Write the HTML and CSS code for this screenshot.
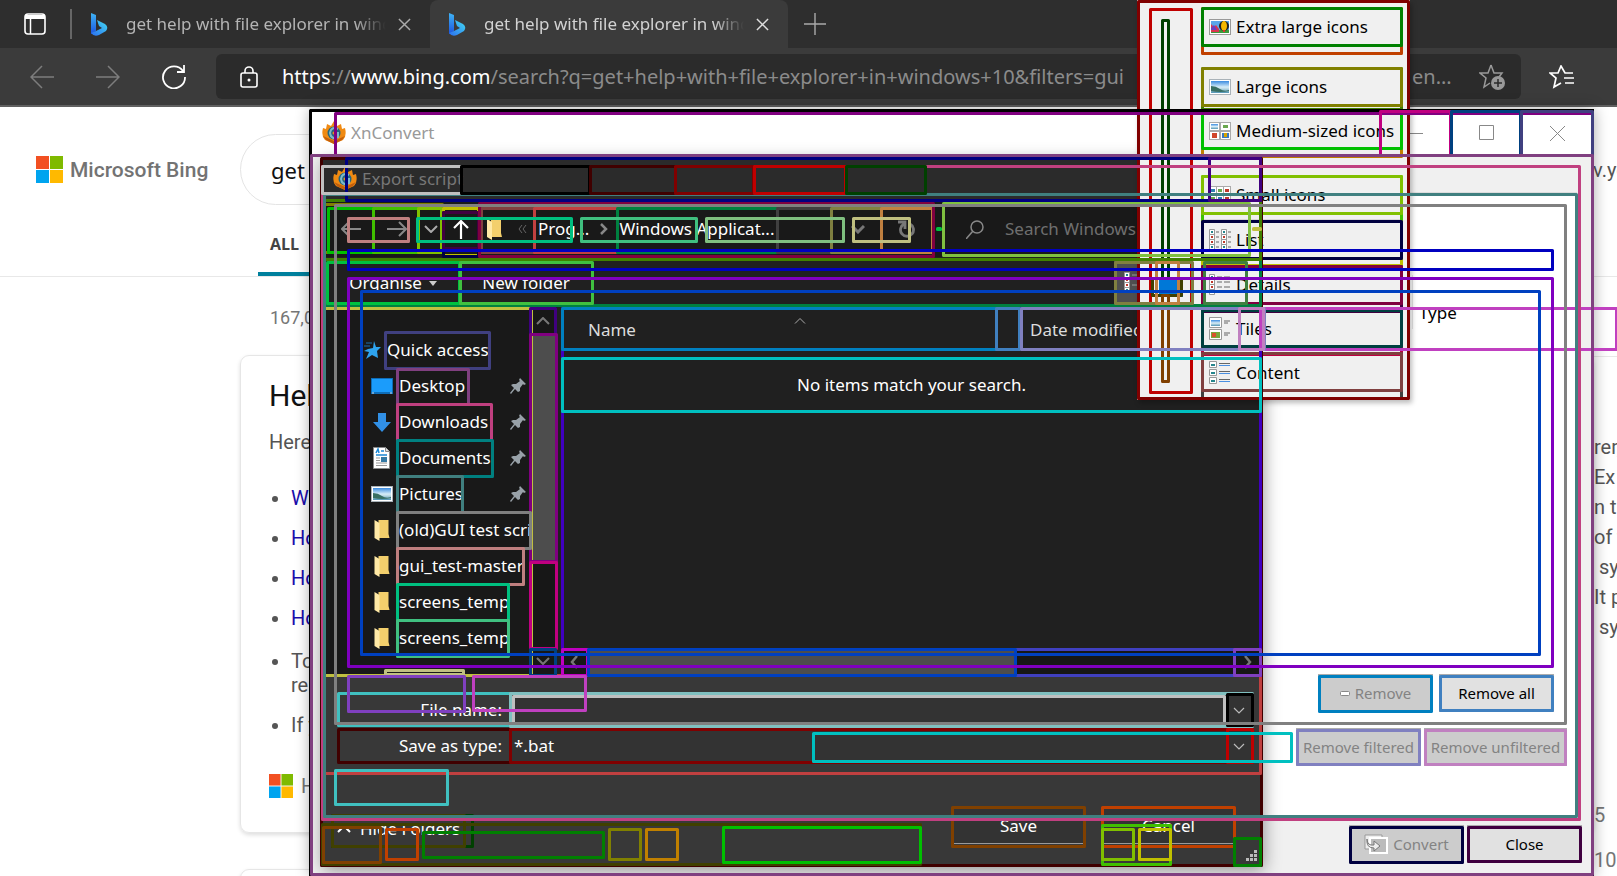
FILE: index.html
```html
<!DOCTYPE html>
<html lang="en">
<head>
<meta charset="utf-8">
<title>get help with file explorer in windows 10</title>
<link rel="stylesheet" href="styles.css">
</head>
<body>
<svg class="defs" aria-hidden="true">
  <defs>
    <linearGradient id="bingBlue" x1="0" y1="0" x2="0" y2="1"><stop offset="0" stop-color="#3fb4f5"/><stop offset="1" stop-color="#1b54e0"/></linearGradient>
    <linearGradient id="bingCyan" x1="1" y1="0" x2="0" y2="1"><stop offset="0" stop-color="#43dcf2"/><stop offset="1" stop-color="#2b6df0"/></linearGradient>
    <linearGradient id="sky" x1="0" y1="0" x2="0" y2="1"><stop offset="0" stop-color="#3a8be0"/><stop offset=".5" stop-color="#d5ecf8"/><stop offset=".6" stop-color="#c6e0ea"/><stop offset="1" stop-color="#4f93b4"/></linearGradient>
    <symbol id="bing" viewBox="0 0 17 23"><path d="M0 0l5 2v16l-5 3z" fill="url(#bingBlue)"/><path d="M6 7l8 4q4 3 1 7l-7 4q-5 2-8-2l5-2 6-3-3-2z" fill="url(#bingCyan)"/></symbol>
    <symbol id="x" viewBox="0 0 14 14"><path d="M1 1l12 12M13 1L1 13" fill="none" stroke="currentColor" stroke-width="1.6"/></symbol>
    <symbol id="mslogo" viewBox="0 0 27 27"><path d="M0 0h13v13H0z" fill="#f25022"/><path d="M14 0h13v13H14z" fill="#7fba00"/><path d="M0 14h13v13H0z" fill="#00a4ef"/><path d="M14 14h13v13H14z" fill="#ffb900"/></symbol>
    <symbol id="xn" viewBox="0 0 24 24"><path d="M1 7l3 1 1-5 4 2 3-5 3 5 4-2 1 5 3-1q2 8-2 12l-9 4-9-4Q-1 15 1 7z" fill="#f08a12"/><path d="M1 15l3 4 8 4 8-4 3-4-11 5z" fill="#c45f0b"/><circle cx="12" cy="12" r="6.500" fill="#23677f"/><path d="M16 8q-7-3-8 4 1 7 8 4v-4h-4" fill="none" stroke="#7fb9c9" stroke-width="2"/><circle cx="12" cy="12" r="1.500" fill="#ee8a1c"/></symbol>
    <symbol id="folder" viewBox="0 0 15 21"><path d="M4 0h10v14l1 4H4z" fill="#f3cf6c"/><path d="M0 0l5 3v18l-5-3z" fill="#ffe9a6"/></symbol>
    <symbol id="down" viewBox="0 0 14 8"><path d="M1 1l6 6 6-6" fill="none" stroke="currentColor" stroke-width="2"/></symbol>
    <symbol id="thin" viewBox="0 0 12 7"><path d="M1 1l5 5 5-5" fill="none" stroke="#bbb" stroke-width="1.200"/></symbol>
    <symbol id="pin" viewBox="0 0 16 16"><path d="M10 0l6 6-2 1-1-1-3 4v3l-2 1-3-3-4 5-1-1 4-5-3-3 2-1 3 0 4-3-1-1z" fill="#98a1a8"/></symbol>
    <symbol id="photo" viewBox="0 0 22 16"><path d="M0 0h22v16H0z" fill="#a9b2b8"/><path d="M1 1h20v14H1z" fill="#fff"/><path d="M2 2h18v12H2z" fill="url(#sky)"/><path d="M2 7q5 0 9 3t9 1v1q-9 2-18 0z" fill="#386f63"/></symbol>
    <symbol id="rows" viewBox="0 0 22 22"><g fill="#fff" stroke="#999"><path d="M.5.5h5v5h-5zM.5 5.500h5v5h-5zM.5 10.500h5v5h-5zM.5 15.500h5v5h-5z"/></g><path d="M2 2h2v2H2zM2 17h2v2H2z" fill="#26868d"/><path d="M2 7h2v2H2zM2 12h2v2H2z" fill="#c0392b"/></symbol>
  </defs>
</svg>

<header class="tabstrip">
  <button class="icon-btn tabs-menu" aria-label="Tab actions"><svg width="22" height="22" viewBox="0 0 22 22"><rect x="1" y="1" width="20" height="20" rx="3" fill="none" stroke="#fff" stroke-width="1.600"/><path d="M1 2h20v4H1z" fill="#fff"/><path d="M6.500 6v15" stroke="#fff" stroke-width="1.500"/></svg></button>
  <div class="tab"><svg class="favicon"><use href="#bing"/></svg><span class="tab-title">get help with file explorer in windows 10</span><button class="icon-btn" aria-label="Close tab"><svg width="13" height="13"><use href="#x"/></svg></button></div>
  <div class="tab active"><svg class="favicon"><use href="#bing"/></svg><span class="tab-title">get help with file explorer in windows 10</span><button class="icon-btn" aria-label="Close tab"><svg width="13" height="13"><use href="#x"/></svg></button></div>
  <button class="icon-btn new-tab" aria-label="New tab"><svg width="22" height="22" viewBox="0 0 22 22"><path d="M11 0v22M0 11h22" stroke="currentColor" stroke-width="1.400"/></svg></button>
</header>
<div class="toolbar">
  <button class="icon-btn" aria-label="Back"><svg width="24" height="24" viewBox="0 0 24 24"><path d="M24 12H1M12 1L1 12l11 11" fill="none" stroke="#7d7d7d" stroke-width="1.500"/></svg></button>
  <button class="icon-btn" aria-label="Forward"><svg width="24" height="24" viewBox="0 0 24 24"><path d="M0 12h23M12 1l11 11-11 11" fill="none" stroke="#7d7d7d" stroke-width="1.500"/></svg></button>
  <button class="icon-btn" aria-label="Refresh"><svg width="24" height="24" viewBox="0 0 24 24"><path d="M21 6A11 11 0 1 0 23 12M22 0v7h-7" fill="none" stroke="#fff" stroke-width="1.800"/></svg></button>
  <div class="address">
    <svg width="18" height="22" viewBox="0 0 18 22"><rect x="1" y="7" width="16" height="14" rx="2" fill="none" stroke="#fff" stroke-width="1.600"/><path d="M5 7V5a4 4 0 0 1 8 0v2" fill="none" stroke="#fff" stroke-width="1.600"/><circle cx="9" cy="14" r="1.500" fill="#fff"/></svg>
    <span class="url"><b>https</b>://<b>www.bing.com</b>/search?q=get+help+with+file+explorer+in+windows+10&amp;filters=gui</span>
    <span class="url-end">en...</span>
    <svg width="26" height="26" viewBox="0 0 26 26"><path d="M12 1l3 8h8l-3 4M12 1L9 9H1l6 5-2 9 6-4" fill="none" stroke="#999" stroke-width="1.500"/><circle cx="19" cy="19" r="7" fill="#999"/><path d="M19 15v8M15 19h8" stroke="#2b2b2b" stroke-width="1.500"/></svg>
  </div>
  <button class="icon-btn" aria-label="Favourites"><svg width="26" height="24" viewBox="0 0 26 24"><path d="M24 8h-8L12 1 9 8H1l6 5-2 9 7-4M15 13h10M16 18h9" fill="none" stroke="#fff" stroke-width="1.700"/></svg></button>
</div>

<main class="page">
  <div class="search-row">
    <svg width="27" height="27"><use href="#mslogo"/></svg>
    <span class="brand">Microsoft Bing</span>
    <input class="search" aria-label="Search the web" value="get">
    <span class="account">v.ye</span>
  </div>
  <nav class="scopes"><a href="#all">ALL</a></nav>
  <div class="columns">
    <div class="results">
      <p class="count">167,0</p>
      <section class="card">
        <h1>Hel</h1>
        <p>Here</p>
        <ul>
          <li><a href="#w">W</a></li><li><a href="#h1">Ho</a></li><li><a href="#h2">Ho</a></li><li><a href="#h3">Ho</a></li>
          <li class="long">To<br>re</li><li class="last">If y</li>
        </ul>
        <div class="source"><svg width="24" height="24"><use href="#mslogo"/></svg><span>H</span></div>
      </section>
      <section class="card next"></section>
    </div>
    <aside class="side">
      <div class="side-lines"><span>rer,</span><span>Ex</span><span>n t</span><span>of t</span><span>&nbsp;sy</span><span>It p</span><span>&nbsp;sy</span></div>
      <div class="side-nums"><span>5</span><span>10</span></div>
    </aside>
  </div>
</main>

<section class="xn-window" aria-label="XnConvert">
  <header class="xn-title">
    <svg width="24" height="24"><use href="#xn"/></svg><span>XnConvert</span>
    <button class="cap" aria-label="Minimise"><svg width="15" height="15"><path d="M0 7.500h15" stroke="#888"/></svg></button>
    <button class="cap" aria-label="Maximise"><svg width="16" height="16"><path d="M.5.5h14v14h-14z" fill="none" stroke="#888"/></svg></button>
    <button class="cap" aria-label="Close"><svg width="15" height="15"><path d="M0 0l15 15M15 0L0 15" stroke="#888"/></svg></button>
  </header>
  <div class="xn-pane">
    <div class="xn-list"><span class="type-head">Type</span></div>
    <div class="xn-row"><button disabled><svg width="10" height="5"><rect x=".5" y=".5" width="9" height="4" rx="1" fill="#fff" stroke="#888"/></svg>Remove</button><button>Remove all</button></div>
    <div class="xn-row wide"><input class="filter" aria-label="Filter"><button class="fit" disabled>Remove filtered</button><button class="fit2" disabled>Remove unfiltered</button></div>
  </div>
  <footer class="xn-foot">
    <button disabled><svg width="24" height="20" viewBox="0 0 24 20"><path d="M1 1h17v14H1z" fill="#eee" stroke="#999"/><path d="M6 4h17v15H6z" fill="#bbb" stroke="#fff" stroke-width="2"/><path d="M3 5q0 7 7 6v-4l6 5-6 5v-3Q2 14 3 5z" fill="#eee" stroke="#777"/></svg>Convert</button><button>Close</button>
  </footer>
</section>

<section class="dialog" aria-label="Export script">
  <header class="dlg-title"><svg width="24" height="24"><use href="#xn"/></svg><span>Export script</span></header>
  <div class="dlg-nav">
    <button class="icon-btn nav-a" aria-label="Back"><svg width="20" height="16" viewBox="0 0 20 16"><path d="M20 8H1M8 1L1 8l7 7" fill="none" stroke="#888" stroke-width="2"/></svg></button>
    <button class="icon-btn nav-a" aria-label="Forward"><svg width="20" height="16" viewBox="0 0 20 16"><path d="M0 8h19M12 1l7 7-7 7" fill="none" stroke="#888" stroke-width="2"/></svg></button>
    <button class="icon-btn nav-b" aria-label="Recent"><svg width="14" height="8"><use href="#down"/></svg></button>
    <button class="icon-btn nav-c" aria-label="Up"><svg width="16" height="20" viewBox="0 0 16 20"><path d="M8 20V2M1 9l7-7 7 7" fill="none" stroke="#fff" stroke-width="2.200"/></svg></button>
    <div class="crumbs">
      <svg width="15" height="21"><use href="#folder"/></svg>
      <svg class="more" width="9" height="8"><path d="M4 0L1 4l3 4M8 0L5 4l3 4" fill="none" stroke="#666"/></svg>
      <span>Prog...</span>
      <svg width="8" height="12"><path d="M1 1l5 5-5 5" fill="none" stroke="#888" stroke-width="2.500"/></svg>
      <span>Windows Applicat...</span>
      <svg class="push" width="14" height="9" viewBox="0 0 14 9"><path d="M1 1l6 6 6-6" fill="none" stroke="#777" stroke-width="3"/></svg>
      <svg class="reload" width="17" height="18" viewBox="0 0 17 18"><path d="M6 4A6.500 6.500 0 1 0 12 4M0 2h7v7" fill="none" stroke="#777" stroke-width="2.800"/></svg>
    </div>
    <div class="dlg-search"><svg width="18" height="19" viewBox="0 0 18 19"><circle cx="11" cy="7" r="6" fill="none" stroke="#888" stroke-width="1.500"/><path d="M7 11l-7 8" stroke="#888" stroke-width="1.500"/></svg><input aria-label="Search" placeholder="Search Windows"></div>
  </div>
  <div class="dlg-tools"><button class="organise">Organise<i></i></button><button class="newf">New folder</button><button class="views" aria-label="Change view"><svg width="30" height="22" viewBox="0 0 30 22"><use href="#rows" width="22" height="22"/><path d="M8 3h8M8 13h8" stroke="#999"/></svg></button></div>
  <div class="dlg-body">
    <nav class="tree">
      <a class="root" href="#q"><svg width="19" height="18" viewBox="0 0 19 18"><path d="M12 0l2 6h5l-4 4 1 7-6-3-6 4 3-7-5-1 4-2 5-1z" fill="#2ea4ef"/><path d="M4 2h6M2 5h6" stroke="#1b6fb0"/></svg>Quick access</a>
      <a href="#d"><svg width="22" height="16" viewBox="0 0 22 16"><path d="M0 0h22v16H0z" fill="#0e6db8"/><path d="M1 1h20v13H1z" fill="#1b9cfb"/><path d="M1 15h20" stroke="#cde" stroke-dasharray="2 16"/></svg>Desktop<svg class="pin"><use href="#pin"/></svg></a>
      <a href="#dl"><svg width="22" height="19" viewBox="0 0 22 19"><path d="M7 0h8v9h5l-9 10L2 9h5z" fill="#3190e6"/></svg>Downloads<svg class="pin"><use href="#pin"/></svg></a>
      <a href="#dc"><svg width="22" height="22" viewBox="0 0 22 22"><path d="M2.500.5h12l4 4v17h-16z" fill="#fff" stroke="#888"/><path d="M14.500.5v4h4" fill="#ddd" stroke="#888"/><path d="M5 6l2-4 1 4M10 4h3M5 8h11" fill="none" stroke="#1b87d4" stroke-width="1.500"/><path d="M5 11h4M5 13.500h4M5 16h11M5 18.500h11" stroke="#999"/><path d="M10 10h6v5h-6z" fill="#347aa5"/></svg>Documents<svg class="pin"><use href="#pin"/></svg></a>
      <a href="#p"><svg width="22" height="16"><use href="#photo"/></svg>Pictures<svg class="pin"><use href="#pin"/></svg></a>
      <a href="#f1"><svg width="22" height="21"><use href="#folder"/></svg>(old)GUI test scri</a>
      <a href="#f2"><svg width="22" height="21"><use href="#folder"/></svg>gui_test-master</a>
      <a href="#f3"><svg width="22" height="21"><use href="#folder"/></svg>screens_temp</a>
      <a href="#f4"><svg width="22" height="21"><use href="#folder"/></svg>screens_temp</a>
    </nav>
    <div class="vbar"><svg width="14" height="8" class="flip"><use href="#down"/></svg><i></i><svg width="14" height="8"><use href="#down"/></svg></div>
    <div class="files">
      <table>
        <thead><tr><th class="name">Name<svg width="12" height="6" viewBox="0 0 12 6"><path d="M1 5.500l5-5 5 5" fill="none" stroke="#aaa"/></svg></th><th>Date modified</th></tr></thead>
        <tbody><tr><td colspan="2">No items match your search.</td></tr></tbody>
      </table>
      <div class="hbar"><svg width="9" height="14" viewBox="0 0 9 14"><path d="M7 1L2 7l5 6" fill="none" stroke="#777" stroke-width="2.500"/></svg><i></i><svg width="9" height="14" viewBox="0 0 9 14"><path d="M2 1l5 6-5 6" fill="none" stroke="#777" stroke-width="2.500"/></svg></div>
    </div>
  </div>
  <form class="dlg-form">
    <label for="fn">File name:</label><div class="combo"><input id="fn"><svg width="12" height="7"><use href="#thin"/></svg></div>
    <label for="ft">Save as type:</label><div class="combo"><select id="ft"><option>*.bat</option></select><svg width="12" height="7"><use href="#thin"/></svg></div>
  </form>
  <footer class="dlg-foot">
    <button class="hide"><svg width="14" height="8" class="flip"><use href="#down"/></svg>Hide Folders</button>
    <button class="act">Save</button><button class="act">Cancel</button>
    <svg class="grip" width="12" height="12"><path d="M8 0h3v3H8zM8 4h3v3H8zM8 8h3v3H8zM4 4h3v3H4zM4 8h3v3H4zM0 8h3v3H0z" fill="#bbb"/></svg>
  </footer>
</section>

<section class="viewmenu" aria-label="View">
  <input type="range" aria-label="Icon size" value="75">
  <div class="items">
    <button><svg width="22" height="16" viewBox="0 0 22 16"><path d="M0 0h22v16H0z" fill="#999"/><path d="M1 1h20v14H1z" fill="#fff"/><path d="M2 2h18v12H2z" fill="#5aa7ea"/><path d="M2 11h18v3H2z" fill="#3a9a3a"/><path d="M2 5l3 3 2-2 3 4v3H2z" fill="#d9364f"/><path d="M2 9l3-3 3 5H2z" fill="#6b3fc0"/><ellipse cx="15" cy="7" rx="5" ry="5" fill="#222"/><ellipse cx="15" cy="7" rx="3" ry="5" fill="#f5b800"/><path d="M14 11h2v2h-2z" fill="#d33"/></svg>Extra large icons</button>
    <button class="far"><svg width="22" height="16"><use href="#photo"/></svg>Large icons</button>
    <button><svg width="22" height="18" viewBox="0 0 22 18"><path d="M0 0h22v18H0z" fill="#aaa"/><path d="M1 1h9v7H1zM12 1h9v7h-9zM1 10h9v7H1zM12 10h9v7h-9z" fill="#fff"/><path d="M2 2h7v5H2z" fill="url(#sky)"/><path d="M14 3h5v3h-5z" fill="#6aa84f"/><path d="M3 11h5v5H3z" fill="#d0452b"/><path d="M13 11h7v5h-7z" fill="#3a78c0"/><path d="M15 11h3v4h-3z" fill="#d9a400"/></svg>Medium-sized icons</button>
    <button class="farther"><svg width="22" height="18" viewBox="0 0 22 18"><path d="M0 0h22v18H0z" fill="#aaa"/><path d="M1 1h6v7H1zM8 1h6v7H8zM15 1h6v7h-6zM1 9h6v8H1zM8 9h6v8H8zM15 9h6v8h-6z" fill="#fff"/><path d="M2 3h4v3H2zM9 11h4v3H9z" fill="#2e7fb0"/><path d="M9 3h4v3H9zM2 11h4v3H2z" fill="#6aa84f"/><path d="M16 3h4v3h-4zM16 11h4v3h-4z" fill="#c0392b"/></svg>Small icons</button>
    <button class="sep"><svg width="22" height="22" viewBox="0 0 22 22"><use href="#rows" width="22" height="22"/><use href="#rows" x="12" width="22" height="22"/><path d="M7 3h3M7 8h3M7 13h3M7 18h3M19 3h3M19 8h3M19 13h3M19 18h3" stroke="#666"/></svg>List</button>
    <button class="sep"><svg width="22" height="22" viewBox="0 0 22 22"><use href="#rows" width="22" height="22"/><path d="M8 3h5M8 8h5M8 13h5M15 3h6M15 8h6M15 13h6" stroke="#666"/></svg>Details</button>
    <button><svg width="22" height="24" viewBox="0 0 22 24"><path d="M.5.5h12v10H.5zM.5 12.500h12v10H.5z" fill="#fff" stroke="#999"/><path d="M2 3h9v6H2z" fill="url(#sky)"/><path d="M2 15h9v6H2z" fill="#78a63c"/><path d="M3 16h4v4H3z" fill="#d8502b"/><path d="M15 4h6M15 6h4M15 16h6M15 18h4" stroke="#666"/></svg>Tiles</button>
    <button><svg width="22" height="24" viewBox="0 0 22 24"><path d="M.5.5h7v6h-7zM.5 8.500h7v6h-7zM.5 16.500h7v6h-7z" fill="#fff" stroke="#999"/><path d="M2 3h4v2H2zM2 11h4v2H2zM2 19h4v2H2z" fill="#26868d"/><path d="M10 2.500h11M10 10.500h11M10 18.500h11" stroke="#666"/><path d="M10 4.500h11M10 12.500h11M10 20.500h11" stroke="#4a90e2"/></svg>Content</button>
  </div>
</section>

<svg class="boxes" id="boxes" aria-hidden="true"></svg>
<script src="boxes.js"></script>
</body>
</html>
```
FILE: styles.css
```css
* { box-sizing: border-box; }
html, body { height: 100%; }
body { margin: 0; overflow: hidden; position: relative; display: flex; flex-direction: column; background: #fff; font: 17px/24px "Noto Sans", "Open Sans", sans-serif; color: #000; }
button, input, select { font: inherit; color: inherit; margin: 0; }
button { cursor: pointer; }
svg { flex: none; display: block; }
h1, p, ul { margin: 0; padding: 0; font-weight: 400; }
a { color: inherit; text-decoration: none; }
.defs { position: absolute; width: 0; height: 0; }
.icon-btn { background: none; border: 0; padding: 0; display: flex; align-items: center; justify-content: center; color: #aaa; }
.flip { transform: rotate(180deg); }

/* Browser chrome */
.tabstrip, .toolbar { flex: none; }
.tabstrip { height: 48px; background: #2e2e2e; display: flex; align-items: center; }
.tabs-menu { width: 72px; height: 30px; border-right: 2px solid #666; }
.tab { width: 358px; height: 48px; display: flex; align-items: center; padding: 0 17px 0 19px; color: #b4b4b4; }
.tab.active { background: #3b3b3b; border-radius: 8px 8px 0 0; color: #d2d2d2; }
.tab.active .icon-btn { color: #ddd; }
.favicon { width: 17px; height: 23px; }
.tab-title { width: 260px; margin: 0 12px 0 18px; white-space: nowrap; overflow: hidden; mask-image: linear-gradient(90deg, #000 88%, transparent); }
.new-tab { margin-left: 16px; }
.toolbar { height: 59px; background: #3b3b3b; border-bottom: 2px solid #606060; display: flex; align-items: center; padding-left: 30px; gap: 42px; }
.address { flex: 1; height: 45px; margin-left: -12px; background: #2b2b2b; border-radius: 6px; display: flex; align-items: center; padding: 0 16px 0 24px; color: #8b8b8b; font-size: 20px; }
.url { flex: 1; width: 0; overflow: hidden; white-space: nowrap; margin-left: 24px; }
.url b { color: #fff; font-weight: 400; }
.url-end { width: 67px; flex: none; }
.toolbar > .icon-btn:last-child { margin: 0 42px 0 -14px; }

/* Search page */
.page { flex: 1; min-height: 0; overflow: hidden; font-family: Roboto, sans-serif; color: #555; font-size: 20px; }
.search-row { display: flex; align-items: center; height: 98px; padding: 27px 0 0 36px; }
.brand { width: 177px; padding-left: 7px; font-size: 21px; font-weight: 500; color: #737373; }
.search { flex: 1; height: 71px; border: 1px solid #e4e4e4; border-radius: 36px; padding: 0 30px; font-family: "Noto Sans", sans-serif; font-size: 22px; color: #111; }
.account { width: 24px; white-space: nowrap; }
.scopes { height: 72px; border-bottom: 1px solid #e8e8e8; padding-left: 258px; display: flex; align-items: flex-end; font: 700 16px/52px "Open Sans", sans-serif; color: #444; }
.scopes a { border-bottom: 4px solid #00809d; padding: 0 12px; height: 58px; }
.columns { display: grid; grid-template-columns: 1fr 23px; padding-left: 240px; }
.count { height: 78px; padding: 29px 0 0 30px; font-size: 18px; color: #767676; }
.card { border: 1px solid #e6e6e6; border-radius: 9px; box-shadow: 0 2px 4px #0002; padding: 20px 28px 34px; }
.card h1 { font-size: 30px; line-height: 40px; color: #111; }
.card p { margin-top: 11px; line-height: 30px; }
.card ul { margin-top: 21px; padding-left: 22px; line-height: 40px; }
.card a { color: #1a0dab; }
.card .long { line-height: 24px; margin-top: 11px; }
.card .last { line-height: 24px; margin-top: 16px; }
.source { display: flex; align-items: center; gap: 8px; margin-top: 37px; height: 24px; color: #767676; }
.card.next { margin-top: 36px; height: 60px; }
.side { margin-top: 79px; border-top: 1px solid #e8e8e8; padding-top: 75px; line-height: 30px; white-space: nowrap; }
.side-lines, .side-nums { display: grid; }
.side-nums { margin-top: 158px; row-gap: 15px; color: #767676; }

/* XnConvert window */
.xn-window { position: absolute; left: 310px; right: 23px; top: 109px; bottom: 0; background: #f0f0f0; border: 1px solid #000; box-shadow: 0 0 14px #0005; display: flex; flex-direction: column; overflow: hidden; }
.xn-title { height: 46px; background: #fff; display: flex; align-items: center; padding-left: 11px; color: #999; }
.xn-title span { flex: 1; padding-left: 5px; }
.cap { width: 71px; height: 46px; border: 0; background: none; display: flex; align-items: center; justify-content: center; }
.xn-pane { flex: 1; margin: 36px 16px 0 14px; background: #fff; border-top: 1px solid #ddd; display: flex; flex-direction: column; align-items: flex-end; }
.xn-list { align-self: stretch; flex: 1; margin: 82px 35px 0; }
.type-head { display: block; width: 130px; height: 54px; margin-left: auto; border-left: 1px solid #e5e5e5; padding: 26px 6px 0; }
.xn-row, .xn-foot { display: flex; justify-content: flex-end; gap: 6px; font-size: 15px; }
.xn-row { padding-right: 23px; height: 38px; }
.xn-row.wide { padding-right: 10px; margin: 16px 0 50px; gap: 3px; }
.xn-row button, .xn-foot button { width: 115px; height: 38px; padding: 0; border: 1px solid #adadad; background: #e1e1e1; display: flex; align-items: center; justify-content: center; gap: 5px; }
.xn-window button:disabled { background: #ccc; color: #838383; }
.xn-row .fit { width: 125px; }
.xn-row .fit2 { width: 143px; }
.filter { width: 481px; height: 31px; margin-top: 3px; border: 0; }
.xn-foot { height: 59px; padding: 9px 11px 0 0; gap: 3px; }

/* Export dialog */
.dialog { position: absolute; left: 321px; top: 157px; width: 941px; height: 709px; background: #383838; color: #fff; display: flex; flex-direction: column; box-shadow: 2px 4px 16px #0006; }
.dlg-title { height: 44px; background: #2b2b2b; display: flex; align-items: center; gap: 5px; padding-left: 12px; color: #777; }
.dlg-nav { height: 56px; background: #191919; display: flex; align-items: center; padding-left: 7px; color: #888; }
.nav-a { width: 46px; }
.nav-b { width: 22px; }
.nav-c { width: 38px; }
.crumbs { width: 454px; display: flex; align-items: center; color: #fff; gap: 11px; padding: 0 19px 0 7px; white-space: nowrap; }
.crumbs .more { margin-left: 5px; }
.crumbs svg { color: #888; }
.crumbs .push { margin-left: auto; }
.crumbs .reload { margin-left: 22px; }
.dlg-search { flex: 1; display: flex; align-items: center; gap: 21px; padding-left: 32px; }
.dlg-search input { width: 160px; border: 0; padding: 0; background: none; }
.dlg-search input::placeholder { color: #6f6f6f; opacity: 1; }
.dlg-tools { height: 50px; background: #202020; display: flex; align-items: center; padding: 2px 68px 0 5px; }
.dlg-tools button { background: none; border: 0; padding: 0; }
.organise { width: 134px; display: flex; align-items: center; justify-content: center; gap: 7px; }
.organise i { border: 4px solid transparent; border-top: 5px solid #ccc; border-bottom: 0; }
.newf { width: 132px; }
.dlg-tools .views { width: 80px; height: 44px; margin-left: auto; padding-left: 10px; background: #4f4f4f; }
.dlg-body { height: 368px; display: flex; background: #202020; }
.tree { width: 208px; background: #191919; padding-top: 25px; overflow: hidden; }
.tree a { display: flex; align-items: center; height: 36px; gap: 6px; padding: 0 3px 0 50px; white-space: nowrap; }
.tree a.root { padding-left: 41px; }
.pin { width: 16px; height: 16px; margin-left: auto; }
.vbar { width: 28px; background: #171717; display: flex; flex-direction: column; align-items: center; justify-content: space-between; padding: 10px 0; color: #777; }
.vbar i { width: 28px; height: 228px; margin: 8px 0 auto; background: #4d4d4d; }
.files { flex: 1; margin-left: 4px; display: flex; flex-direction: column; }
.files table { width: 100%; border-collapse: collapse; table-layout: fixed; color: #ddd; }
.files th { height: 45px; padding: 0 9px; text-align: left; font-weight: 400; }
.files th.name { width: 460px; padding-left: 27px; }
.files th svg { float: right; margin-right: 206px; }
.files td { height: 66px; text-align: center; padding: 0; color: #fff; }
.hbar { height: 27px; margin-top: auto; background: #171717; display: flex; align-items: center; padding: 0 10px 0 9px; }
.hbar i { width: 427px; height: 27px; margin: 0 auto 0 8px; background: #4d4d4d; }
.dlg-form { display: grid; grid-template-columns: 171px 1fr; grid-auto-rows: 36px; align-items: center; padding: 17px 8px 0 16px; column-gap: 2px; }
.dlg-form label { text-align: right; padding-right: 6px; }
.combo { height: 32px; display: flex; align-items: center; background: #333; padding-right: 9px; }
.combo input, .combo select { flex: 1; appearance: none; background: none; border: 0; padding: 0 4px; outline: 0; height: 32px; }
.dlg-foot { flex: 1; display: flex; align-items: flex-end; padding: 0 4px 22px 16px; }
.dlg-foot button { background: none; border: 0; padding: 0; }
.dlg-foot .hide { display: flex; align-items: center; gap: 9px; margin-right: auto; height: 30px; }
.dlg-foot .act { width: 131px; height: 37px; background: #333; border: 1px solid #9a9a9a; margin-right: 19px; }
.dlg-foot .act + .act { margin-right: 12px; }
.grip { margin-bottom: -18px; }

/* View menu */
.viewmenu { position: absolute; left: 1137px; top: 0; width: 273px; height: 400px; background: #f0f0f0; display: flex; padding-left: 12px; box-shadow: 2px 3px 5px #0004; }
.viewmenu input { appearance: none; writing-mode: vertical-lr; width: 44px; height: 363px; margin: 20px 0 0; background: none; }
.viewmenu input::-webkit-slider-thumb { appearance: none; width: 24px; height: 18px; background: #0078d7; }
.items { flex: 1; padding: 7px 7px 0 8px; display: flex; flex-direction: column; gap: 4px; }
.items button { height: 40px; flex: none; border: 0; padding: 0 0 0 8px; background: none; display: flex; align-items: center; gap: 5px; white-space: nowrap; }
.items .far { margin-top: 16px; }
.items .farther { margin-top: 20px; }
.items .sep { height: 41px; border-top: 1px solid #d7d7d7; }

.boxes { position: absolute; left: 0; top: 0; width: 100%; height: 100%; pointer-events: none; }
.boxes rect { fill: none; stroke-width: 3; stroke-linejoin: round; }
```
FILE: boxes.js
```js
// Element bounds: left, top, right, bottom, colour. Later entries lie on top.
const bounds = `
1201 7 1403 55 c04000|1201 67 1403 111 408000|1201 109 1403 158 c08000|1201 175 1403 223 40c000|1201 220 1403 267 c0c000|1201 265 1403 313 400040|1201 309 1403 356 c00040|1201 352 1403 400 404040
1137 0 1410 400 800000|1149 8 1193 394 c00000|1161 19 1170 280 004000|1151 277 1183 297 404000|1161 294 1170 383 804000
1201 7 1403 47 008000|1201 67 1403 107 808000|1201 109 1403 150 00c000|1201 175 1403 215 80c000|1201 220 1403 260 000040|1201 265 1403 305 800040|1201 309 1403 348 004040|1201 352 1403 392 804040
320 157 1263 867 400000|323 674 1262 775 c04040|323 307 533 677 c0c040|323 258 1262 307 008040|323 199 1262 261 408000|323 203 444 254 808000
327 207 375 254 00c000|372 207 420 254 40c000|417 207 443 254 80c000|442 207 480 257 c0c000|442 211 480 258 000040|442 211 480 250 400040
480 207 536 254 804040|533 207 619 254 c04040|616 207 779 254 008040|776 207 833 254 404040|830 207 883 254 808040|880 207 934 254 c08040|478 202 935 258 800040
936 227 942 230 00c040|1252 227 1262 230 c0c040|942 202 1251 257 80c040
326 261 461 305 00c040|459 261 594 305 40c040|1114 261 1194 305 808040|1155 261 1180 305 c08040|1203 261 1248 305 408040
561 307 1262 677 4000c0|561 307 998 351 0080c0|995 307 1021 351 4080c0|1259 307 1618 351 c040c0|1020 307 1266 351 8080c0|1238 307 1265 351 c080c0|561 357 1262 413 00c0c0
529 307 557 336 400080|529 333 558 563 800080|529 561 558 650 c00080|529 648 557 677 004080
561 648 589 677 c000c0|1014 648 1236 677 4040c0|587 648 1017 677 0040c0|1233 648 1262 677 8040c0
384 331 491 370 404080|396 368 470 406 804080|396 403 493 442 c04080|396 439 494 478 008080|396 475 464 514 408080|396 511 532 550 808080|396 547 525 586 c08080|396 583 510 622 00c080|396 619 510 658 40c080|384 669 465 676 c0c080
337 692 512 727 40c0c0|509 692 1254 728 80c0c0|512 695 1226 725 c0c0c0|1226 693 1254 727 000000
337 728 512 764 400000|509 728 1254 764 800000|1226 728 1254 764 c00000
951 806 1086 848 804000|1101 806 1236 848 c04000|1233 837 1262 867 008000|331 814 474 848 004000|331 814 466 848 404000
309 109 1594 877 000000|334 112 1594 157 800080|1379 110 1452 157 c00080|1450 110 1522 157 004080|1520 110 1594 157 404080
310 154 1594 876 804080|345 157 1262 202 000080|1208 157 1262 202 400080
321 165 1581 821 c04080|323 193 1578 818 408080|321 165 463 195 c0c0c0|460 165 591 195 000000|589 165 677 195 400000|674 165 755 195 800000|753 165 847 195 c00000|845 165 927 195 004000
334 204 1567 725 808080|347 217 410 243 c08080|416 217 573 243 00c080|580 217 698 243 40c080|705 217 845 243 80c080|852 217 911 243 c0c080
347 249 1554 271 0000c0|347 277 1554 668 8000c0|360 290 1541 656 0040c0
347 675 466 713 8040c0|472 675 587 712 c040c0|1318 675 1433 713 0080c0|1439 675 1554 712 4080c0|812 732 1293 763 00c0c0|1296 729 1421 766 8080c0|1424 729 1567 766 c080c0|334 769 449 806 40c0c0
321 823 922 866 404000|322 826 382 864 804000|385 828 419 861 c04000|422 831 605 859 008000|608 828 642 861 808000|645 828 679 861 c08000|722 826 922 864 00c000|1101 824 1172 866 40c000|1101 828 1135 861 80c000|1138 828 1172 861 c0c000
1349 826 1464 864 000040|1467 826 1582 863 400040`;
const layer = document.getElementById("boxes");
for (const entry of bounds.trim().split(/[|\n]/)) {
  const [l, t, r, b, colour] = entry.split(" ");
  const rect = document.createElementNS("http://www.w3.org/2000/svg", "rect");
  rect.setAttribute("x", +l + 1.5);
  rect.setAttribute("y", +t + 1.5);
  rect.setAttribute("width", Math.max(r - l - 3, 1));
  rect.setAttribute("height", Math.max(b - t - 3, 1));
  rect.setAttribute("stroke", "#" + colour);
  layer.append(rect);
}
```
